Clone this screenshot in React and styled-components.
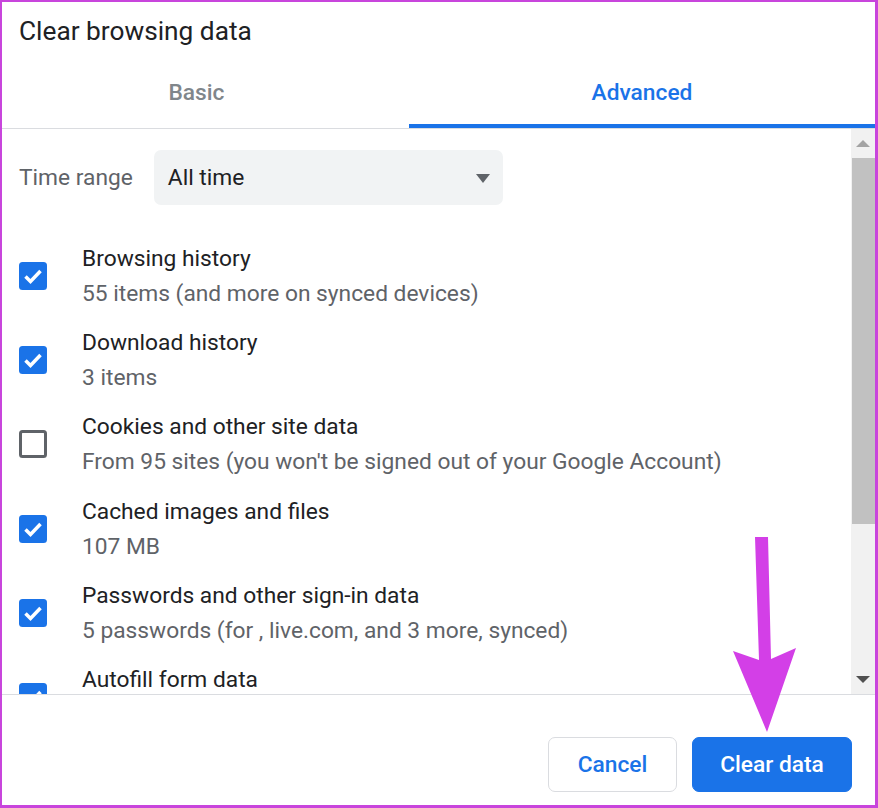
import React from "react";
import styled, { createGlobalStyle } from "styled-components";

const rows = [
  { title: "Browsing history", note: "55 items (and more on synced devices)", checked: true },
  { title: "Download history", note: "3 items", checked: true },
  {
    title: "Cookies and other site data",
    note: "From 95 sites (you won't be signed out of your Google Account)",
    checked: false,
  },
  { title: "Cached images and files", note: "107 MB", checked: true },
  {
    title: "Passwords and other sign-in data",
    note: "5 passwords (for , live.com, and 3 more, synced)",
    checked: true,
  },
  { title: "Autofill form data", note: "", checked: true },
];

const GlobalStyle = createGlobalStyle`
  html, body {
    margin: 0;
    padding: 0;
    background: #fff;
  }

  body {
    font-family: Roboto, "Noto Sans", Arial, sans-serif;
  }
`;

const Frame = styled.div`
  position: relative;
  width: 878px;
  height: 808px;
  box-sizing: border-box;
  border: 2px solid #c845dc;
  border-right-width: 3px;
  border-bottom-width: 3px;
  background: #fff;
  display: flex;
  flex-direction: column;
  overflow: hidden;
`;

const Title = styled.h1`
  margin: 0;
  padding: 13px 0 0 17px;
  font-size: 26.25px;
  line-height: 32px;
  font-weight: 400;
  color: #202124;
`;

const TabBar = styled.div`
  display: flex;
  border-bottom: 1px solid #dadce0;
`;

const Tab = styled.div`
  flex: ${(p) => (p.$active ? "1" : "0 0 389px")};
  margin-left: ${(p) => (p.$active ? "18px" : "0")};
  padding: 32px 0 17px;
  text-align: center;
  font-size: 22.75px;
  line-height: 28px;
  font-weight: 500;
  color: ${(p) => (p.$active ? "#1a73e8" : "#80868b")};
  border-bottom: 4px solid ${(p) => (p.$active ? "#1a73e8" : "transparent")};
`;

const Body = styled.div`
  flex: 1;
  min-height: 0;
  display: flex;
`;

const List = styled.div`
  flex: 1;
  overflow: hidden;
  padding: 21px 0 0 17px;
`;

const TimeRow = styled.div`
  display: flex;
  align-items: center;
  gap: 21px;
  height: 55px;
  margin-bottom: 28.6px;
`;

const Label = styled.span`
  font-size: 22.75px;
  color: #5f6368;
`;

const Select = styled.div`
  width: 349px;
  height: 55px;
  box-sizing: border-box;
  padding: 0 13px 0 14px;
  border-radius: 7px;
  background: #f1f3f4;
  display: flex;
  align-items: center;
  justify-content: space-between;
  font-size: 22.75px;
  color: #202124;
`;

const Caret = styled.span`
  width: 0;
  height: 0;
  border-left: 7px solid transparent;
  border-right: 7px solid transparent;
  border-top: 9px solid #5f6368;
  margin-top: 2px;
`;

const Row = styled.div`
  display: flex;
  align-items: center;
  gap: 35px;
  padding: 7.15px 0;
`;

const Box = styled.span`
  flex: 0 0 28px;
  width: 28px;
  height: 28px;
  box-sizing: border-box;
  border-radius: 3.5px;
  background: ${(p) => (p.$checked ? "#1a73e8" : "#fff")};
  border: ${(p) => (p.$checked ? "none" : "3.5px solid #5f6368")};
  display: flex;
  align-items: center;
  justify-content: center;
`;

const Texts = styled.div`
  display: flex;
  flex-direction: column;
  font-size: 22.75px;
  line-height: 35px;
`;

const RowTitle = styled.span`
  color: #202124;
`;

const RowNote = styled.span`
  color: #5f6368;
  min-height: 35px;
`;

const ScrollBar = styled.div`
  flex: 0 0 24px;
  display: flex;
  flex-direction: column;
  background: #f1f1f1;
`;

const ScrollButton = styled.div`
  height: 29px;
  display: flex;
  align-items: center;
  justify-content: center;
`;

const ScrollArrow = styled.span`
  width: 0;
  height: 0;
  border-left: 7px solid transparent;
  border-right: 7px solid transparent;
  ${(p) =>
    p.$down
      ? "border-top: 7px solid #505050;"
      : "border-bottom: 7px solid #a3a3a3;"}
`;

const Thumb = styled.div`
  height: 366px;
  background: #c1c1c1;
  margin-left: 1px;
`;

const Track = styled.div`
  flex: 1;
`;

const Footer = styled.div`
  flex: 0 0 111px;
  box-sizing: border-box;
  border-top: 1px solid #dadce0;
  display: flex;
  justify-content: flex-end;
  align-items: flex-start;
  gap: 15px;
  padding: 42px 23px 0 0;
`;

const Button = styled.button`
  width: ${(p) => (p.$primary ? "160px" : "129px")};
  height: 55px;
  box-sizing: border-box;
  padding: 0;
  border-radius: 7px;
  border: 1px solid ${(p) => (p.$primary ? "#1a73e8" : "#dadce0")};
  background: ${(p) => (p.$primary ? "#1a73e8" : "#fff")};
  color: ${(p) => (p.$primary ? "#fff" : "#1a73e8")};
  font-family: Roboto, "Noto Sans", Arial, sans-serif;
  font-size: 22.75px;
  font-weight: 500;
`;

const Pointer = styled.svg`
  position: absolute;
  left: 731px;
  top: 534px;
  width: 64px;
  height: 198px;
  pointer-events: none;
`;

const Check = () => (
  <svg width="28" height="28" viewBox="0 0 28 28">
    <path
      d="M6.5 14.5 L11.5 19.5 L21.5 9"
      fill="none"
      stroke="#fff"
      strokeWidth="3.5"
    />
  </svg>
);

const App = () => (
  <>
    <GlobalStyle />
    <Frame>
      <Title>Clear browsing data</Title>
      <TabBar>
        <Tab>Basic</Tab>
        <Tab $active>Advanced</Tab>
      </TabBar>
      <Body>
        <List>
          <TimeRow>
            <Label>Time range</Label>
            <Select>
              All time
              <Caret />
            </Select>
          </TimeRow>
          {rows.map((r) => (
            <Row key={r.title}>
              <Box $checked={r.checked}>{r.checked && <Check />}</Box>
              <Texts>
                <RowTitle>{r.title}</RowTitle>
                <RowNote>{r.note}</RowNote>
              </Texts>
            </Row>
          ))}
        </List>
        <ScrollBar>
          <ScrollButton>
            <ScrollArrow />
          </ScrollButton>
          <Thumb />
          <Track />
          <ScrollButton>
            <ScrollArrow $down />
          </ScrollButton>
        </ScrollBar>
      </Body>
      <Footer>
        <Button>Cancel</Button>
        <Button $primary>Clear data</Button>
      </Footer>
      <Pointer viewBox="733 536 64 198">
        <polygon
          points="755,537 768,537 771,659 796,648 767,732 733,651 759,660"
          fill="#d33fe7"
        />
      </Pointer>
    </Frame>
  </>
);

export default App;
